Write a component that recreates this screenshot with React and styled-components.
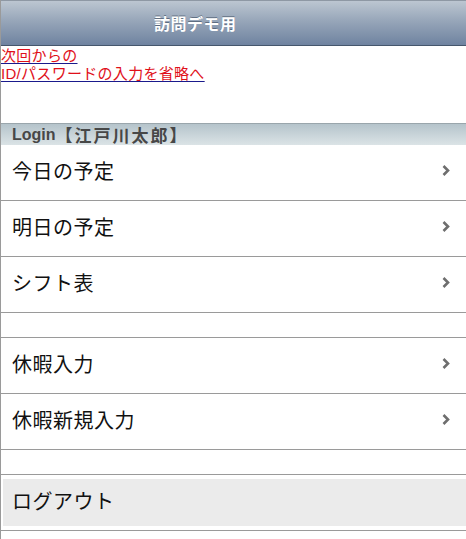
import React from "react";
import styled, { createGlobalStyle } from "styled-components";

const GlobalStyle = createGlobalStyle`
  body {
    margin: 0;
    background: #fff;
    font-family: "Liberation Sans", "Noto Sans CJK JP", sans-serif;
  }
`;

const Page = styled.div`
  width: 466px;
  min-height: 539px;
  box-sizing: border-box;
  border-left: 1px solid #9a9a9a;
  background: #fff;
`;

const Header = styled.header`
  height: 44px;
  border-top: 1px solid #8e98a4;
  border-bottom: 1px solid #45566c;
  background: linear-gradient(to bottom, #bcc6d1 0%, #97a6b9 45%, #6f83a0 100%);
  display: flex;
  align-items: center;
  padding-left: 153px;
`;

const Title = styled.h1`
  margin: 0;
  color: #fff;
  font-size: 16px;
  font-weight: bold;
  letter-spacing: 0.5px;
  text-shadow: 0 -1px 0 rgba(40, 55, 75, 0.5);
`;

const Notice = styled.div`
  height: 76px;
  padding-top: 1px;
`;

const SkipLink = styled.a`
  color: #e0101a;
  font-size: 15px;
  line-height: 18px;
  letter-spacing: 0.3px;
  text-decoration: underline #1a1a8c;
  text-underline-offset: 2px;
  cursor: pointer;
`;

const SectionBar = styled.div`
  height: 21px;
  border-top: 1px solid #9aa6ac;
  background: linear-gradient(to bottom, #b5c4cb 0%, #dbe3e6 100%);
  padding-left: 11px;
  display: flex;
  align-items: center;
  color: #474747;
  font-size: 16px;
  font-weight: bold;
`;

const UserName = styled.span`
  font-size: 17px;
  letter-spacing: 2px;
`;

const List = styled.ul`
  list-style: none;
  margin: 0;
  padding: 0;
`;

const Row = styled.li`
  box-sizing: border-box;
  height: 56px;
  border-bottom: 1px solid #9a9a9a;
  display: flex;
  align-items: center;
  justify-content: space-between;
  padding: 0 15px 4px 11px;
  color: #111;
  font-size: 20px;
  letter-spacing: 0.5px;
  cursor: pointer;
`;

const Spacer = styled.li`
  height: 24px;
  border-bottom: 1px solid #9a9a9a;
`;

const LogoutRow = styled.li`
  height: 56px;
  border-bottom: 1px solid #9a9a9a;
  padding: 4px 0 4px 2px;
  box-sizing: border-box;
  display: flex;
`;

const LogoutButton = styled.div`
  flex: 1;
  background: #ebebeb;
  display: flex;
  align-items: center;
  padding: 0 0 4px 9px;
  color: #111;
  font-size: 20px;
  letter-spacing: 0.5px;
  cursor: pointer;
`;

const Chevron = () => (
  <svg width="10" height="13" viewBox="0 0 10 13">
    <path
      d="M2.5 2 L7 6.5 L2.5 11"
      fill="none"
      stroke="#6e6e6e"
      strokeWidth="2.6"
    />
  </svg>
);

const MenuItem = ({ label }) => (
  <Row>
    <span>{label}</span>
    <Chevron />
  </Row>
);

export default function App() {
  return (
    <>
      <GlobalStyle />
      <Page>
        <Header>
          <Title>訪問デモ用</Title>
        </Header>
        <Notice>
          <SkipLink>次回からの</SkipLink>
          <br />
          <SkipLink>ID/パスワードの入力を省略へ</SkipLink>
        </Notice>
        <SectionBar>
          Login<UserName>【江戸川太郎】</UserName>
        </SectionBar>
        <List>
          <MenuItem label="今日の予定" />
          <MenuItem label="明日の予定" />
          <MenuItem label="シフト表" />
          <Spacer />
          <MenuItem label="休暇入力" />
          <MenuItem label="休暇新規入力" />
          <Spacer />
          <LogoutRow>
            <LogoutButton>ログアウト</LogoutButton>
          </LogoutRow>
        </List>
      </Page>
    </>
  );
}
